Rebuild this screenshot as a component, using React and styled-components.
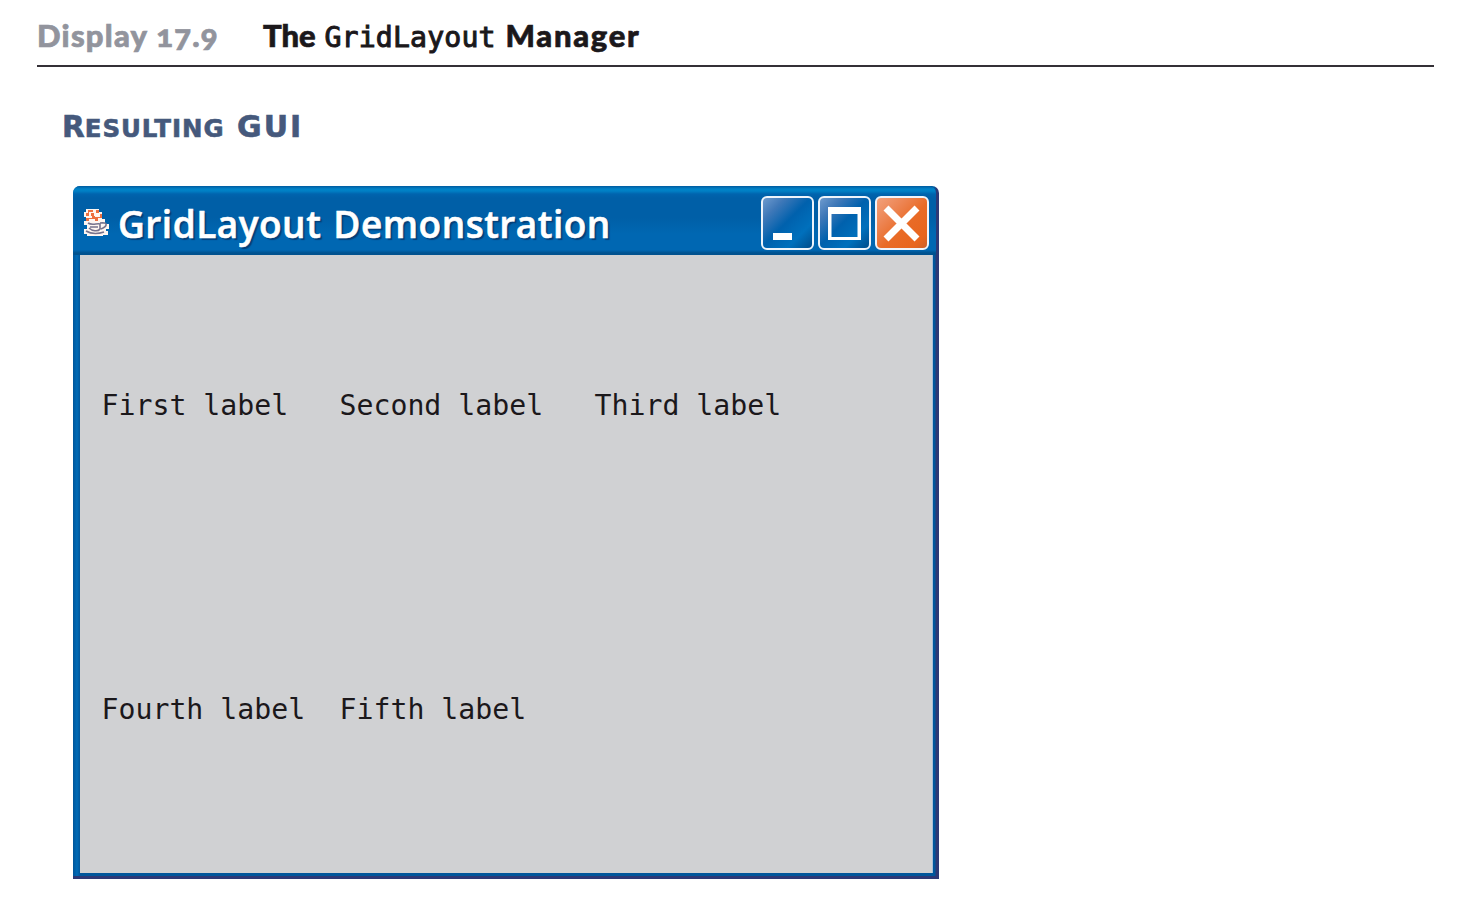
import React from "react";
import styled, { createGlobalStyle } from "styled-components";

const Global = createGlobalStyle`
  * { box-sizing: border-box; }
  body { margin: 0; background: #fff; }
`;

const Page = styled.main`
  width: 1470px;
  height: 902px;
  padding: 15px 36px 0 37px;
  overflow: hidden;
  background: #fff;
`;

const Caption = styled.header`
  display: flex;
  align-items: baseline;
  height: 52px;
  border-bottom: 2px solid #343036;
  white-space: pre;
  line-height: 40px;
`;

const Heading = styled.span`
  font: 900 31px/40px Lato, sans-serif;
  letter-spacing: ${(p) => p.$track || 0}px;
  width: ${(p) => p.$width}px;
  color: ${(p) => p.$color || "#1b181b"};
  -webkit-text-stroke: 0.7px ${(p) => p.$color || "#1b181b"};
  font-variant-numeric: oldstyle-nums;
`;

const Code = styled.code`
  width: 181px;
  font: 28.2px/40px "DejaVu Sans Mono", monospace;
  -webkit-text-stroke: 1px #1b181b;
  letter-spacing: 0.15px;
  color: #1b181b;
`;

const Section = styled.h2`
  margin: 38px 0 0 25px;
  height: 44px;
  font: 700 29.5px/44px "DejaVu Sans", sans-serif;
  color: #45597c;
  -webkit-text-stroke: 0.6px #45597c;
  white-space: pre;
`;

const Small = styled.span`
  font-size: 24.5px;
  letter-spacing: 0.95px;
  text-transform: uppercase;
`;

const Rest = styled.span`
  font-size: 30px;
  letter-spacing: 2px;
`;

const Window = styled.section`
  display: flex;
  flex-direction: column;
  width: 866px;
  height: 693px;
  margin: 37px 0 0 36px;
  padding: 0 6px 6px 7px;
  border-radius: 7px 7px 0 0;
  background: linear-gradient(90deg, #00569b, #006bb7 4px, #00569b 7px, #00569b 862px, #2d3976 863px);
  box-shadow: inset 0 -3px #2d3976;
`;

const TitleBar = styled.div`
  display: flex;
  align-items: center;
  height: 69px;
  flex: none;
  margin: 0 -3px 0 -7px;
  padding: 5px 7px 0 10px;
  border-radius: 7px 7px 0 0;
  background: linear-gradient(#005b9f 0, #0082c8 3px, #0080c5 5px, #0064ae 8px, #005fa7 12px, #005fa7 32px, #0067b2 48px, #0067b2 64px, #00528f 67px, #00528f 69px);
`;

const Title = styled.h1`
  flex: 1;
  margin: 2px 0 0 8px;
  font: 600 37px/50px "Open Sans", sans-serif;
  letter-spacing: 0.5px;
  word-spacing: 2px;
  color: #fff;
  -webkit-text-stroke: 0.6px #fff;
  text-shadow: 2px 2px 1px #053f78;
  white-space: pre;
`;

const Controls = styled.div`
  display: flex;
  gap: 4px;
`;

const Control = styled.button`
  display: flex;
  width: ${(p) => (p.$close ? 54 : 53)}px;
  height: 54px;
  padding: 0;
  border: 2px solid #eef4fb;
  border-radius: 6px;
  background: ${(p) =>
    p.$close
      ? "linear-gradient(135deg, #f2a17c 0, #ed8655 28%, #e96b27 55%, #e8651e 85%, #c9602c 100%)"
      : "linear-gradient(135deg, #6f9bce 0, #3f78b8 22%, #0061ad 48%, #0070bc 75%, #004c8b 100%)"};
  svg { display: block; width: 49px; height: 50px; }
`;

const Content = styled.div`
  flex: 1;
  display: grid;
  grid-template-columns: 238px 255px 1fr;
  grid-template-rows: 303.5px 1fr;
  padding-left: 21.5px;
  border-right: 1px solid #a9bdd7;
  background: #d0d1d3;
`;

const Label = styled.span`
  padding-top: 131px;
  font: 28.2px/40px "DejaVu Sans Mono", monospace;
  color: #1b181b;
  white-space: pre;
`;

const JavaIcon = () => (
  <svg width="27" height="30" viewBox="0 0 27 30">
    <path d="M3 1h13v3h3v7h3v5h4v5h-3v2h2v4h-5v1H4v-2H1v-5h3v-4H1v-4h2v-4H1V4h2z" fill="#fff6f1" />
    <path d="M5 2h5v2H6v4H3V5h2zm8 0h3v3h-5v3H8V5h5zm4 4h2v4h-4v3h-3V9h5zM3 10h6V8h3v3H6v2H3z" fill="#ed7040" />
    <path d="M5 15c4 3 9 0 12 1v5c-2 3-8 2-11-1M17 15c8-1 8 3 1 6M3 23c5 3 12 3 18 1M7 19h8" fill="none" stroke="#77738d" strokeWidth="1.6" />
  </svg>
);

const labels = ["First label", "Second label", "Third label", "Fourth label", "Fifth label"];

export default function App() {
  return (
    <Page>
      <Global />
      <Caption>
        <Heading $width={226} $track={1.25} $color="#92949d">Display 17.9</Heading>
        <Heading $width={61.5}>The</Heading>
        <Code>GridLayout</Code>
        <Heading $track={1.7}>Manager</Heading>
      </Caption>
      <Section>R<Small>esulting</Small><Rest> GUI</Rest></Section>
      <Window>
        <TitleBar>
          <JavaIcon />
          <Title>GridLayout Demonstration</Title>
          <Controls>
            <Control aria-label="Minimize">
              <svg viewBox="0 0 49 50"><path d="M10 35h19v7H10z" fill="#fff" /></svg>
            </Control>
            <Control aria-label="Maximize">
              <svg viewBox="0 0 49 50"><path fillRule="evenodd" d="M8 9h33v33H8zM11.500 16v23h26V16z" fill="#fff" /></svg>
            </Control>
            <Control $close aria-label="Close">
              <svg viewBox="0 0 49 50"><path d="M9 10L40 41M40 10L9 41" stroke="#fff" strokeWidth="7" /></svg>
            </Control>
          </Controls>
        </TitleBar>
        <Content>
          {labels.map((label) => <Label key={label}>{label}</Label>)}
        </Content>
      </Window>
    </Page>
  );
}
